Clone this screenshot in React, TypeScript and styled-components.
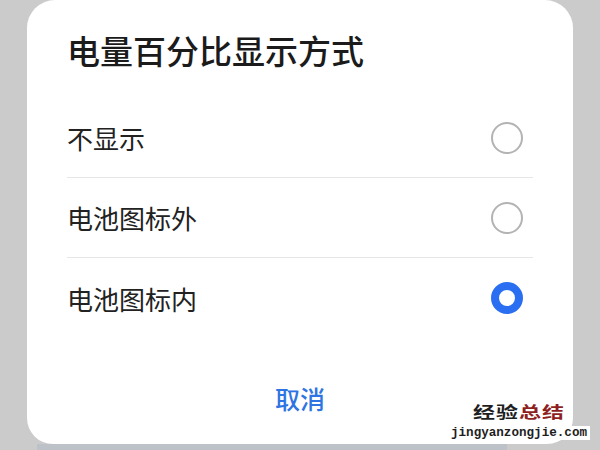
import React from 'react';
import styled, { createGlobalStyle } from 'styled-components';

const GlobalStyle = createGlobalStyle`
  html, body {
    margin: 0;
    padding: 0;
    background: #cbcbcb;
  }
  body {
    font-family: "Noto Sans CJK SC", "Noto Sans", sans-serif;
  }
`;

const Page = styled.div`
  position: relative;
  width: 600px;
  height: 450px;
  overflow: hidden;
  padding: 0 27px;
  box-sizing: border-box;
`;

const Card = styled.div`
  height: 444px;
  background: #ffffff;
  border-radius: 28px 28px 26px 26px;
  padding: 0 40px;
  box-sizing: border-box;
  display: flex;
  flex-direction: column;
`;

const Title = styled.h1`
  margin: 31px 0 0;
  font-size: 33px;
  line-height: 38px;
  font-weight: 500;
  color: #1b1b1b;
`;

const List = styled.div`
  margin-top: 29px;
  display: flex;
  flex-direction: column;
`;

const Row = styled.div`
  height: 80px;
  display: flex;
  align-items: center;
  justify-content: space-between;
  border-bottom: 1px solid #e6e6e6;
  box-sizing: border-box;
  &:last-child {
    border-bottom: none;
  }
`;

const Label = styled.span`
  font-size: 26px;
  color: #222222;
`;

const Radio = styled.span<{ $checked?: boolean }>`
  width: 32px;
  height: 32px;
  margin-right: 10px;
  border-radius: 50%;
  box-sizing: border-box;
  background: #ffffff;
  border: ${(p) => (p.$checked ? '8px solid #2a6ff1' : '2px solid #b3b3b3')};
`;

const Footer = styled.div`
  margin-top: 45px;
  display: flex;
  justify-content: center;
`;

const Cancel = styled.span`
  font-size: 25px;
  line-height: 30px;
  font-weight: 500;
  color: #2e74e2;
`;

const Strip = styled.div`
  height: 6px;
  margin: 0 66px 0 10px;
  background: #bcc2c7;
`;

// watermark is a stretched image in the shot, so the glyphs are squashed
const Watermark = styled.div`
  position: absolute;
  right: 10px;
  bottom: 10px;
  width: 142px;
  display: flex;
  flex-direction: column;
  align-items: center;
  gap: 6px;
`;

const MarkTitle = styled.div`
  height: 18px;
  font-size: 22px;
  line-height: 18px;
  font-weight: 700;
  letter-spacing: 1px;
  color: #1e1e1e;
  transform: scaleY(0.7);
  span {
    color: #8e1f1f;
  }
`;

const MarkUrl = styled.div`
  align-self: stretch;
  text-align: center;
  font-family: "Liberation Mono", monospace;
  font-size: 12.6px;
  line-height: 14px;
  font-weight: 700;
  white-space: nowrap;
  color: #1e1e1e;
  background: #ffffff;
`;

const options = [
  { label: '不显示', checked: false },
  { label: '电池图标外', checked: false },
  { label: '电池图标内', checked: true },
];

const App: React.FC = () => {
  return (
    <>
      <GlobalStyle />
      <Page>
        <Card>
          <Title>电量百分比显示方式</Title>
          <List>
            {options.map((o) => (
              <Row key={o.label}>
                <Label>{o.label}</Label>
                <Radio $checked={o.checked} />
              </Row>
            ))}
          </List>
          <Footer>
            <Cancel>取消</Cancel>
          </Footer>
        </Card>
        <Strip />
        <Watermark>
          <MarkTitle>
            经验<span>总结</span>
          </MarkTitle>
          <MarkUrl>jingyanzongjie.com</MarkUrl>
        </Watermark>
      </Page>
    </>
  );
};

export default App;
